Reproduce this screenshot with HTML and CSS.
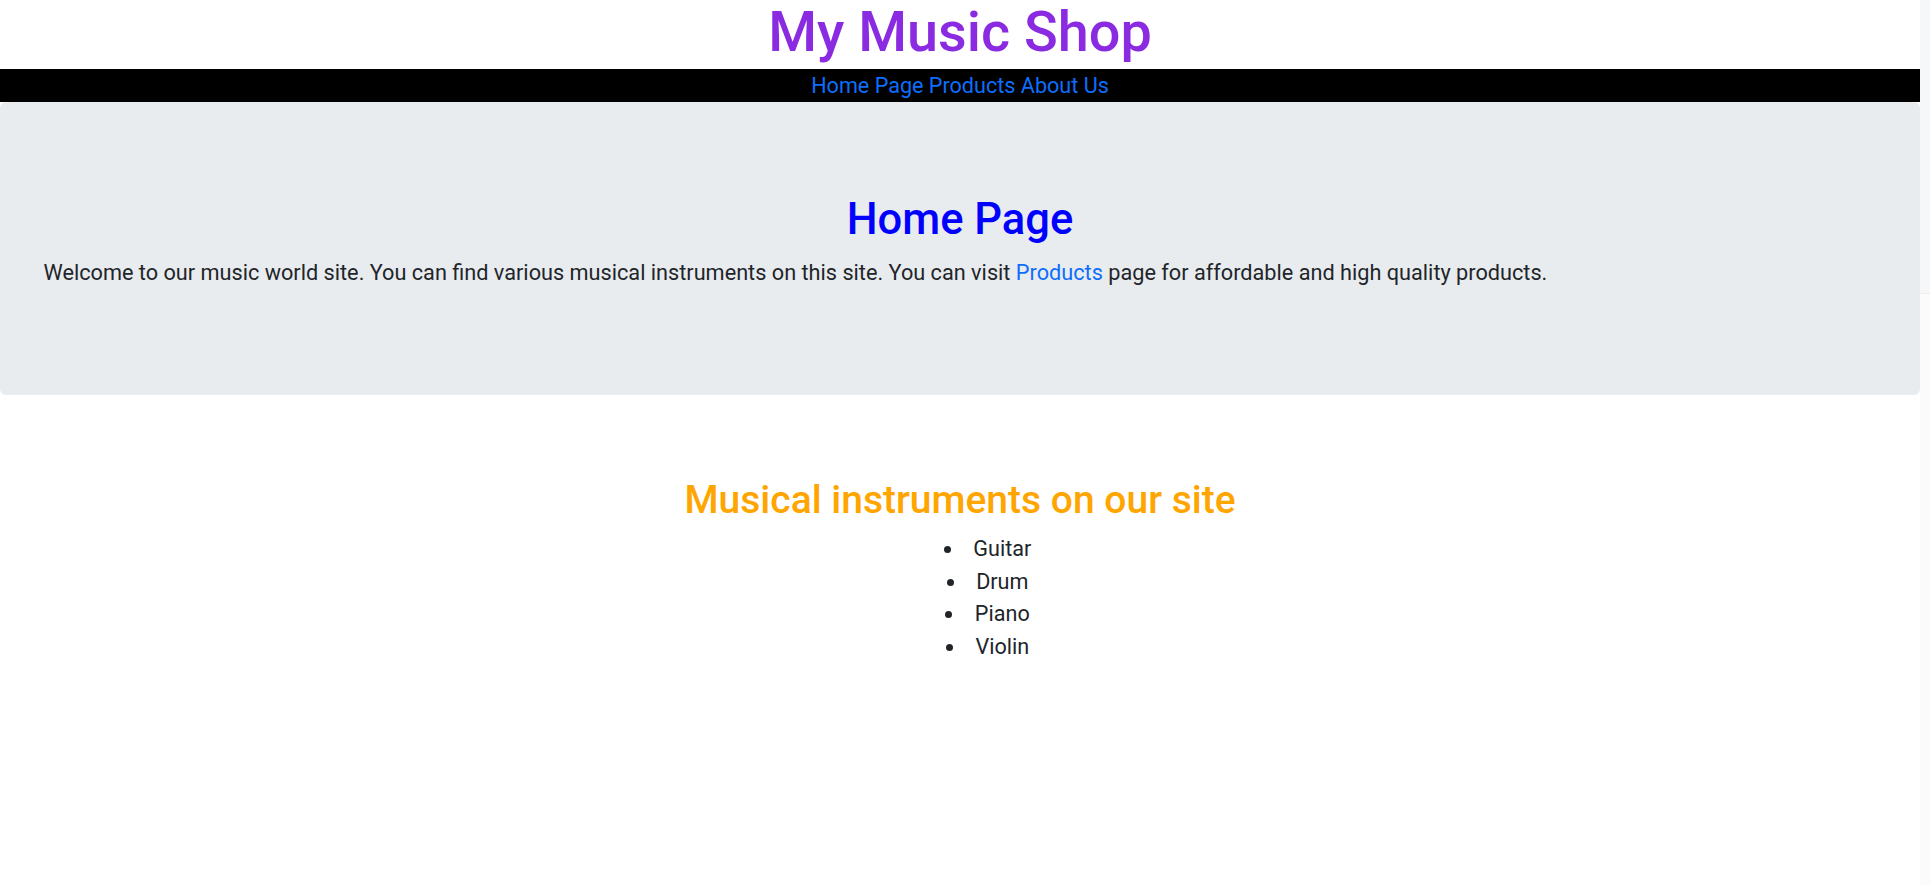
FILE: index.html
```html
<!DOCTYPE html>
<html lang="en">
<head>
<meta charset="utf-8">
<title>My Music Shop</title>
<link rel="stylesheet" href="styles.css">
</head>
<body>
<div class="page">
  <div class="main">
    <header class="site-header">
      <h1 class="site-title">My Music Shop</h1>
    </header>
    <nav class="site-nav">
      <a href="#">Home Page</a> <a href="#">Products</a> <a href="#">About Us</a>
    </nav>
    <section class="jumbotron">
      <h2 class="jumbo-title">Home Page</h2>
      <p class="jumbo-text">Welcome to our music world site. You can find various musical instruments on this site. You can visit <a href="#">Products</a> page for affordable and high quality products.</p>
    </section>
    <section class="instruments">
      <h3 class="instruments-title">Musical instruments on our site</h3>
      <ul class="instruments-list">
        <li>Guitar</li>
        <li>Drum</li>
        <li>Piano</li>
        <li>Violin</li>
      </ul>
    </section>
  </div>
  <div class="scroll-track"><div class="scroll-thumb"></div></div>
</div>
</body>
</html>
```
FILE: styles.css
```css
html, body {
  margin: 0;
  padding: 0;
  background: #ffffff;
}
body {
  font-family: Roboto, "Noto Sans", sans-serif;
  color: #212529;
}
a {
  color: #0d6efd;
  text-decoration: none;
}
.page {
  display: flex;
  min-height: 885px;
}
.main {
  flex: 1;
  min-width: 0;
}
.scroll-track {
  width: 10px;
  background: #fbfbfc;
  display: flex;
  flex-direction: column;
}
.scroll-thumb {
  height: 293px;
  background: #f6f7f9;
  border-bottom: 1px solid #eceeef;
}
.site-header {
  padding-top: 4px;
  padding-bottom: 8px;
}
.site-title {
  margin: 0;
  font-size: 55.8px;
  line-height: 57px;
  font-weight: 500;
  text-align: center;
  color: #8a2be2;
}
.site-nav {
  background: #000000;
  height: 33px;
  font-size: 21.6px;
  line-height: 33px;
  text-align: center;
}
.jumbotron {
  box-sizing: border-box;
  height: 293px;
  background: #e9ecef;
  border-radius: 6px;
  padding: 92px 43.5px 0;
}
.jumbo-title {
  margin: 0 0 10.5px;
  font-size: 43.5px;
  line-height: 52px;
  font-weight: 500;
  text-align: center;
  color: #0000ff;
}
.jumbo-text {
  margin: 0;
  font-size: 21.7px;
  line-height: 32.4px;
}
.instruments {
  padding-top: 81.6px;
}
.instruments-title {
  margin: 0 0 9.8px;
  font-size: 39px;
  line-height: 47px;
  font-weight: 500;
  text-align: center;
  color: #ffa500;
}
.instruments-list {
  margin: 0;
  padding-left: 55px;
  list-style-position: inside;
  text-align: center;
  font-size: 21.6px;
  line-height: 32.4px;
}
```
